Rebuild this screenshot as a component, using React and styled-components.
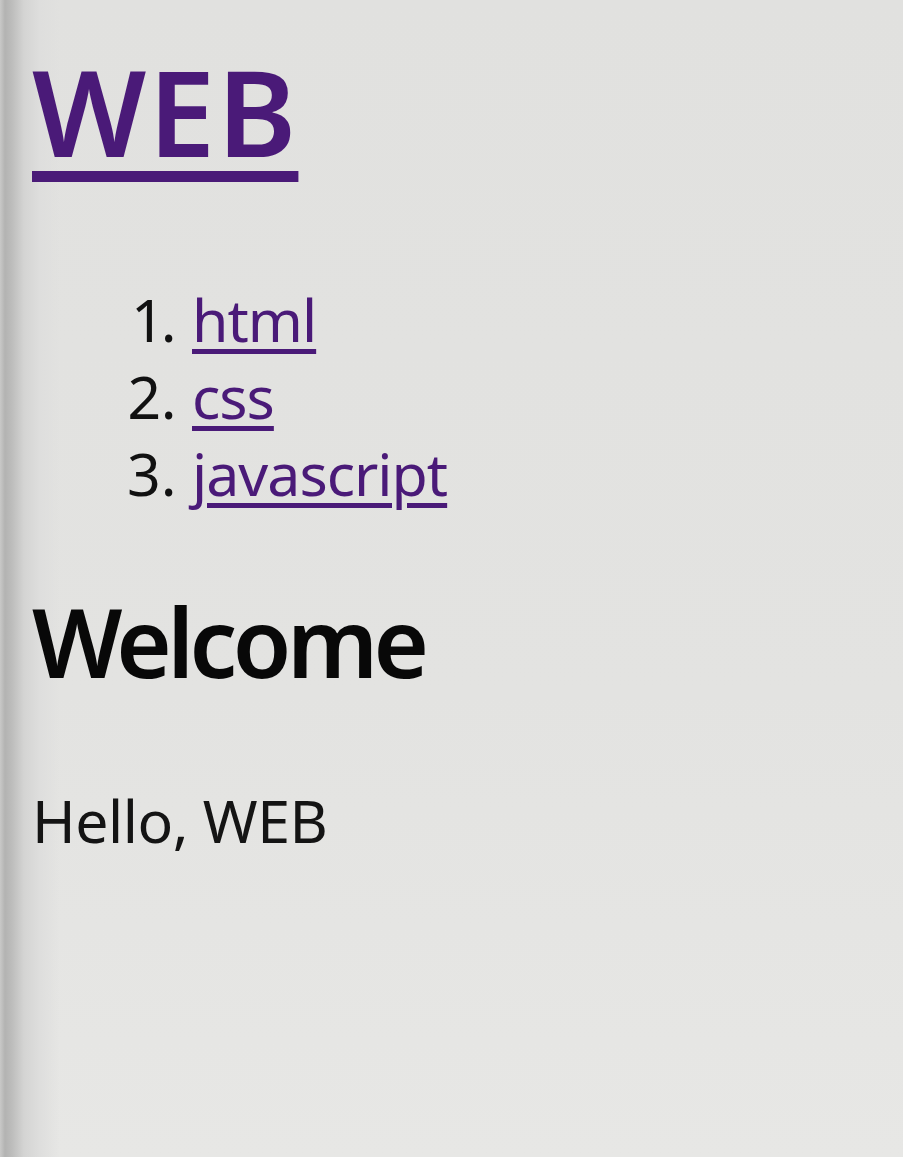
import React from "react";
import styled, { createGlobalStyle } from "styled-components";

const GlobalStyle = createGlobalStyle`
  html, body {
    margin: 0;
    padding: 0;
    min-height: 100%;
  }

  body {
    font-family: "Noto Sans", "Open Sans", sans-serif;
    color: #111;
    background:
      linear-gradient(
        to right,
        #c9c9c8 0px,
        #b3b3b2 5px,
        #bdbdbc 12px,
        #d4d4d3 24px,
        #dededd 40px,
        rgba(226, 226, 224, 0) 60px
      ),
      linear-gradient(to bottom, #e1e1df 0%, #e3e3e1 60%, #e7e7e5 100%);
    min-height: 1157px;
  }
`;

const Page = styled.div`
  padding: 41px 0 0 32px;
  min-height: 1116px;
`;

const Title = styled.h1`
  margin: 0;
  font-size: 120px;
  line-height: 140px;
  font-weight: 600;
  letter-spacing: 2px;

  a {
    color: #4a1a78;
    text-decoration: underline;
    text-decoration-thickness: 11px;
    text-underline-offset: 14px;
  }
`;

const TopicList = styled.ol`
  margin: 100px 0 0;
  padding-left: 160px;
  font-size: 59px;
  line-height: 77px;
`;

const TopicItem = styled.li`
  &::marker {
    font-variant-numeric: proportional-nums;
  }

  a {
    color: #4a1a78;
    letter-spacing: -1px;
    text-decoration: underline;
    text-decoration-thickness: 5px;
    text-underline-offset: 7px;
  }
`;

const Heading = styled.h2`
  margin: 69px 0 0;
  font-size: 95px;
  line-height: 120px;
  font-weight: 650;
  letter-spacing: -4.5px;
  color: #080808;
`;

const Body = styled.p`
  margin: 81px 0 0;
  font-size: 59px;
  line-height: 77px;
  letter-spacing: -0.5px;
  color: #141414;
`;

const topics = ["html", "css", "javascript"];

export default function App() {
  return (
    <>
      <GlobalStyle />
      <Page>
        <Title>
          <a href="#web">WEB</a>
        </Title>
        <TopicList>
          {topics.map((t) => (
            <TopicItem key={t}>
              <a href={`#${t}`}>{t}</a>
            </TopicItem>
          ))}
        </TopicList>
        <Heading>Welcome</Heading>
        <Body>Hello, WEB</Body>
      </Page>
    </>
  );
}
